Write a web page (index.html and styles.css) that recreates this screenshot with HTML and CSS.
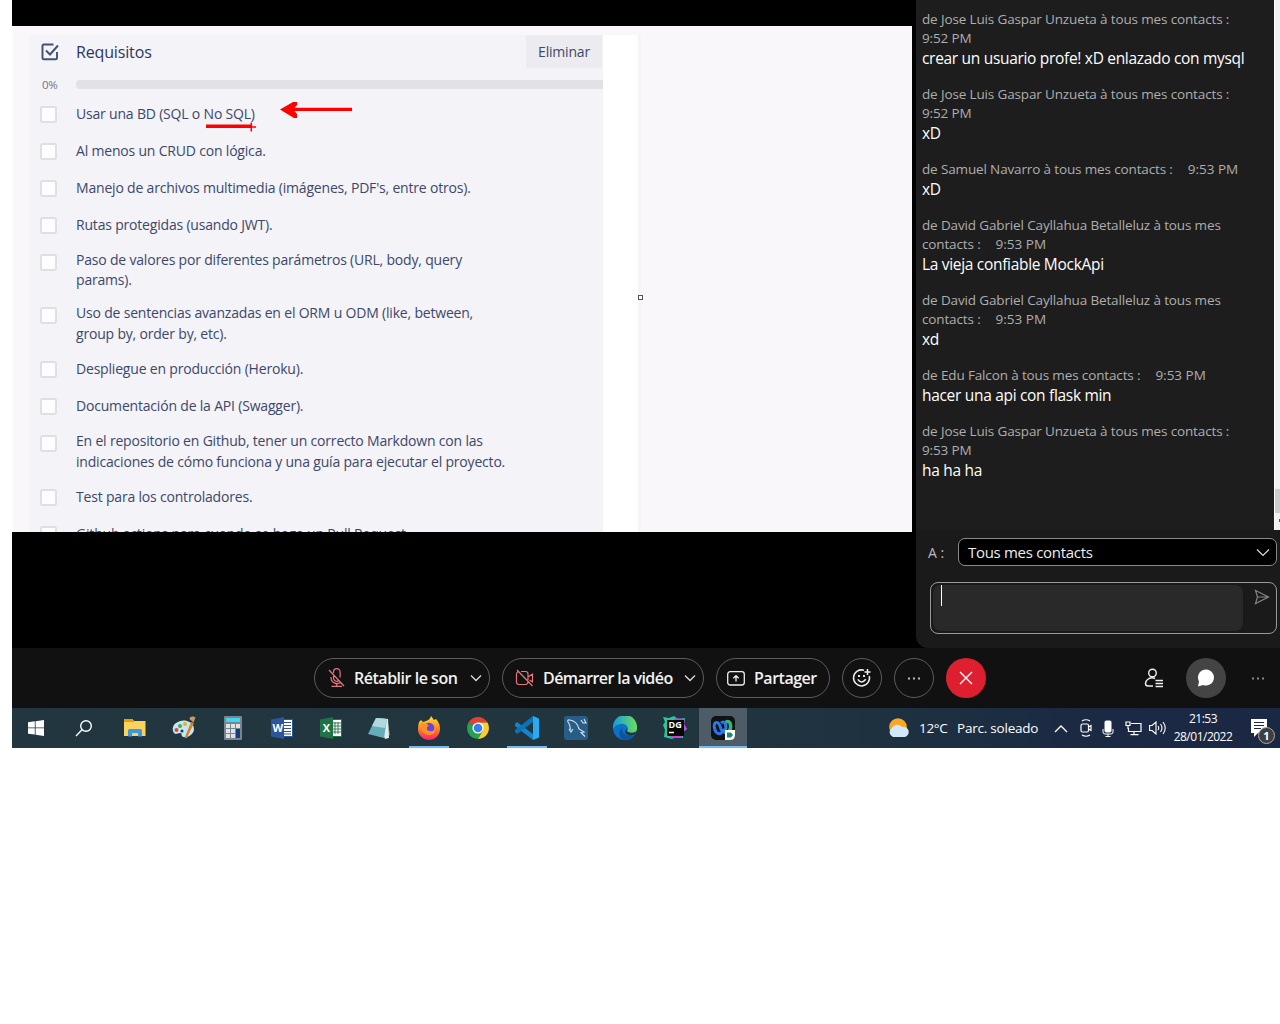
FILE: index.html
```html
<!DOCTYPE html>
<html lang="fr">
<head>
<meta charset="utf-8">
<title>Webex</title>
<link rel="stylesheet" href="styles.css">
</head>
<body>
<div class="desktop">
  <div class="meeting">
    <main class="shared">
      <section class="card">
        <header class="card-head">
          <svg class="check-icon" width="18" height="18" viewBox="0 0 18 18" fill="none" stroke="#44506e" stroke-width="1.9"><path d="M12.5 1.5H2.8Q1.500 1.500 1.500 2.800V15Q1.500 16.300 2.800 16.300H14.700Q16 16.300 16 15V9"/><path d="M5 7.500l4 4 8-9"/></svg>
          <h1>Requisitos</h1>
          <button class="delete">Eliminar</button>
        </header>
        <div class="progress"><span>0%</span><i></i></div>
        <ul class="tasks">
          <li><b></b><p>Usar una BD (SQL o No SQL)</p></li>
          <li><b></b><p>Al menos un CRUD con lógica.</p></li>
          <li><b></b><p>Manejo de archivos multimedia (imágenes, PDF's, entre otros).</p></li>
          <li><b></b><p>Rutas protegidas (usando JWT).</p></li>
          <li class="two"><b></b><p>Paso de valores por diferentes parámetros (URL, body, query<br>params).</p></li>
          <li class="two"><b></b><p>Uso de sentencias avanzadas en el ORM u ODM (like, between,<br>group by, order by, etc).</p></li>
          <li><b></b><p>Despliegue en producción (Heroku).</p></li>
          <li><b></b><p>Documentación de la API (Swagger).</p></li>
          <li class="two"><b></b><p>En el repositorio en Github, tener un correcto Markdown con las<br>indicaciones de cómo funciona y una guía para ejecutar el proyecto.</p></li>
          <li><b></b><p>Test para los controladores.</p></li>
          <li><b></b><p>Github actions para cuando se haga un Pull Request.</p></li>
        </ul>
      </section>
      <div class="gutter"></div>
      <svg class="marks" width="900" height="506" viewBox="12 26 900 506"><path d="M206 126.300H252" stroke="#f00" stroke-width="3.400"/><path d="M248 126.900h8M251.300 122.500v9" stroke="#f00" stroke-width="1.500"/><path d="M290 109.300H352" stroke="#f00" stroke-width="3.300"/><path d="M280 109.500L293 102H297V105L293 109.500L297 114V118H294Z" fill="#f00"/><rect x="638.500" y="295.500" width="4" height="4" fill="#fff" stroke="#555" /></svg>
    </main>
    <aside class="chat">
      <div class="log">
        <div class="messages">
          <article><p class="meta">de Jose Luis Gaspar Unzueta à tous mes contacts :<br>9:52 PM</p><p class="body">crear un usuario profe! xD enlazado con mysql</p></article>
          <article><p class="meta">de Jose Luis Gaspar Unzueta à tous mes contacts :<br>9:52 PM</p><p class="body">xD</p></article>
          <article><p class="meta">de Samuel Navarro à tous mes contacts :<time>9:53 PM</time></p><p class="body">xD</p></article>
          <article><p class="meta">de David Gabriel Cayllahua Betalleluz à tous mes<br>contacts :<time>9:53 PM</time></p><p class="body">La vieja confiable MockApi</p></article>
          <article><p class="meta">de David Gabriel Cayllahua Betalleluz à tous mes<br>contacts :<time>9:53 PM</time></p><p class="body">xd</p></article>
          <article><p class="meta">de Edu Falcon à tous mes contacts :<time>9:53 PM</time></p><p class="body">hacer una api con flask min</p></article>
          <article><p class="meta">de Jose Luis Gaspar Unzueta à tous mes contacts :<br>9:53 PM</p><p class="body">ha ha ha</p></article>
        </div>
        <div class="scroll"><i></i><s></s></div>
      </div>
      <div class="to"><label>A :</label><div class="select"><span>Tous mes contacts</span><svg width="14" height="9" viewBox="0 0 14 9" fill="none" stroke="#ddd" stroke-width="1.200"><path d="M1 1.500l6 6 6-6"/></svg></div></div>
      <div class="composer"><div class="field"><i></i></div><svg width="16" height="16" viewBox="0 0 16 16" fill="none" stroke="#858585" stroke-width="1.200"><path d="M1.500 1.500L14.500 8 1.500 14.500 3.500 8ZM3.500 8H14"/></svg></div>
    </aside>
  </div>

  <div class="controls">
    <button class="pill mute"><svg width="18" height="20" viewBox="0 0 18 20" fill="none" stroke="#e8777f" stroke-width="1.200"><path d="M5.500 5V4a3.300 3.300 0 0 1 6.600 0v5.500M5.500 6v4a3.300 3.300 0 0 0 5.500 2.500M3 9v1a6 6 0 0 0 10 4M8.800 15.500V18M3.500 18.300H14M1 2l15 16"/></svg><span>Rétablir le son</span><svg class="chev" width="12" height="8" viewBox="0 0 12 8" fill="none" stroke="#ddd" stroke-width="1.300"><path d="M1 1.500l5 5 5-5"/></svg></button>
    <button class="pill video"><svg width="20" height="18" viewBox="0 0 20 18" fill="none" stroke="#e8777f" stroke-width="1.200"><path d="M6 2.500H10.500Q13 2.500 13 5V11M13 13Q12.500 15.500 10.500 15.500H4Q1.500 15.500 1.500 13V5Q1.500 3.500 3 2.700M13 8l4.500-3v8L14.500 11M2 1l15.500 16"/></svg><span>Démarrer la vidéo</span><svg class="chev" width="12" height="8" viewBox="0 0 12 8" fill="none" stroke="#ddd" stroke-width="1.300"><path d="M1 1.500l5 5 5-5"/></svg></button>
    <button class="pill share"><svg width="18" height="15" viewBox="0 0 18 15" fill="none" stroke="#eee" stroke-width="1.300"><rect x=".7" y=".7" width="16.600" height="13.300" rx="2.500"/><path d="M9 10.500V5M6.300 7.300L9 4.700l2.700 2.600"/></svg><span>Partager</span></button>
    <button class="round"><svg width="20" height="20" viewBox="0 0 20 20" fill="none" stroke="#eee" stroke-width="1.500"><path d="M12 2.300A8 8 0 1 0 17.300 8M5.800 11.300q3.700 5.500 8 0M15.500 1v6M12.500 4h6"/><path d="M7 7v2M12 7v2" stroke-width="1.900"/></svg></button>
    <button class="round"><svg width="12" height="3" viewBox="0 0 12 3" fill="#bbb"><path d="M0 .5h2v2H0zM5 .5h2v2H5zM10 .5h2v2h-2z"/></svg></button>
    <button class="round leave"><svg width="14" height="14" viewBox="0 0 14 14" stroke="#fff" stroke-width="1.400"><path d="M1 1l12 12M13 1L1 13"/></svg></button>
    <div class="panels">
      <button class="bare"><svg width="20" height="20" viewBox="0 0 20 20" fill="none" stroke="#eee" stroke-width="1.400"><circle cx="8.500" cy="5" r="3.800"/><path d="M11 10.500q-3-1.500-6 0Q1.500 12.500 1.500 15.500 1.500 18 4 18h5M11.500 12.500H19M11.500 15.500H19M11.500 18.500H19"/></svg></button>
      <button class="round active"><svg width="18" height="18" viewBox="0 0 18 18" fill="#fff"><path d="M1 17.500L2 12.500A8 8 0 1 1 6 16Z"/></svg></button>
      <button class="bare"><svg width="12" height="3" viewBox="0 0 12 3" fill="#888"><path d="M0 .5h2v2H0zM5 .5h2v2H5zM10 .5h2v2h-2z"/></svg></button>
    </div>
  </div>

  <footer class="taskbar">
    <div class="apps">
      <span class="sys"><svg width="16" height="16" viewBox="0 0 16 16" fill="#fff"><path d="M0 2.300L6.800 1.300V7.500H0zM7.600 1.200L16 0V7.500H7.600zM0 8.300H6.800V14.600L0 13.700zM7.600 8.300H16V16L7.600 14.700z"/></svg></span>
      <span class="sys"><svg width="18" height="18" viewBox="0 0 18 18" fill="none" stroke="#fff" stroke-width="1.400"><circle cx="11" cy="7" r="5.300"/><path d="M7 10.800L1 17"/></svg></span>
      <span class="app"><svg width="22" height="20" viewBox="0 0 22 20"><path d="M0 1h8l2 2h11.500v15H0z" fill="#fbd35c"/><path d="M0 1h8.500l2 3H0z" fill="#e3a008"/><path d="M4 18.500v-6q0-1.500 1.500-1.500h11q1.500 0 1.500 1.500v6h-4v-3.500H8v3.500z" fill="#3e97e0"/></svg></span>
      <span class="app"><svg width="24" height="24" viewBox="0 0 24 24"><path d="M1 15C-1 8 8 3 15 5q7 2 7 8c0 5-6 9-10 8-4-.5-1-4-4-4s-5 3-7-2z" fill="#c5e6f5"/><circle cx="4.500" cy="14" r="2" fill="#e4453b"/><circle cx="8" cy="10" r="2" fill="#43ad4b"/><circle cx="13" cy="8" r="2" fill="#f1ae19"/><circle cx="10" cy="15" r="1.500" fill="#21394b"/><path d="M12.500 22L19 6l3 1-7 15z" fill="#d9842b"/><path d="M17.500 3q0-3 4-2.500l2 1-2 5z" fill="#c39a6b"/></svg></span>
      <span class="app"><svg width="18" height="24" viewBox="0 0 18 24"><rect width="18" height="24" rx="1" fill="#7b858d"/><path d="M2 2h14v4H2z" fill="#43d5f5"/><path d="M2 8h4v4H2zM7 8h4v4H7zM12 8h4v4h-4zM2 13h4v4H2zM7 13h4v4H7zM2 18h4v4H2zM7 18h4v4H7z" fill="#dfe3e6"/><path d="M12 13h4v9h-4z" fill="#153f78"/></svg></span>
      <span class="app"><svg width="22" height="22" viewBox="0 0 22 22"><path d="M12 2.500h9.500v17H12z" fill="#fff" stroke="#2b579a"/><path d="M13 5.500h7M13 8.500h7M13 11.500h7M13 14.500h7M13 17h7" stroke="#2b579a" stroke-width="1.200"/><path d="M0 2.500L13 0v22L0 19.500z" fill="#2b579a"/><text x="1.500" y="15" class="office">W</text></svg></span>
      <span class="app"><svg width="22" height="22" viewBox="0 0 22 22"><path d="M12 2.500h9.500v17H12z" fill="#fff" stroke="#217346"/><path d="M15 5v12M18 5v12M13 6h8M13 9h8M13 12h8M13 15h8" stroke="#217346" stroke-width=".9"/><path d="M0 2.500L13 0v22L0 19.500z" fill="#217346"/><text x="2.800" y="15" class="office">X</text></svg></span>
      <span class="app"><svg width="24" height="22" viewBox="0 0 24 22"><path d="M19 1l3 17-4 2z" fill="#9c7c4b"/><path d="M8 1l12 1 1 19-4 1z" fill="#dceef0"/><path d="M8 1l11 1-3 19L0 17z" fill="#65adbb"/><path d="M8 1l11 1-2 9-13-2z" fill="#afd9df"/></svg></span>
      <span class="app open"><svg width="24" height="24" viewBox="0 0 24 24"><defs><linearGradient id="ff" x2="0" y2="1"><stop stop-color="#ffe23b"/><stop offset=".5" stop-color="#ff8a20"/><stop offset="1" stop-color="#f9206c"/></linearGradient></defs><path d="M2 6l2-2 2 2 3-1q4-1 5-5l3 4 2-1q4 4 4 10a11 11 0 0 1-22 0Q1 9 2 6z" fill="url(#ff)"/><circle cx="12" cy="12" r="5.300" fill="#6f43d8"/><path d="M4 7l6 1q3 2 0 3-1 4 3 4 4 1 5-3 1 6-5 7-6 0-8-5z" fill="#ff9126"/></svg></span>
      <span class="app"><svg width="22" height="22" viewBox="0 0 22 22"><path d="M11 11L1.500 5.500A11 11 0 0 1 20.500 5.500H11z" fill="#e44134"/><path d="M11 11L1.500 5.500A11 11 0 0 0 11 22l4.800-8.300z" fill="#25a251"/><path d="M11 5.500h9.500A11 11 0 0 1 11 22l4.800-8.300z" fill="#fbcc2f"/><circle cx="11" cy="11" r="5.600" fill="#fff"/><circle cx="11" cy="11" r="4.300" fill="#367ff0"/></svg></span>
      <span class="app open"><svg width="24" height="24" viewBox="0 0 24 24"><path d="M0 8l2-2 16 12v6L0 10z" fill="#1683cc"/><path d="M0 16l2 2L18 6V0L0 14z" fill="#0874bc"/><path d="M18 0l6 2.500v19L18 24z" fill="#2baaf2"/></svg></span>
      <span class="app"><svg width="24" height="24" viewBox="0 0 24 24" fill="none"><rect width="24" height="24" rx="3" fill="#275d87"/><path d="M6 15Q7 10 4 6 3 3.500 6 4q7 1 9 9l5 3-3 .5 4 4M5 13l2 3 2-3M17 4l2 3 3 0-2-4" stroke="#d7e5ed" stroke-width="1.100"/></svg></span>
      <span class="app"><svg width="24" height="24" viewBox="0 0 24 24"><defs><linearGradient id="edge"><stop stop-color="#149bdd"/><stop offset="1" stop-color="#6bde58"/></linearGradient></defs><circle cx="12" cy="12" r="12" fill="#0b72ca"/><path d="M0 10a12 12 0 0 1 24 2c0 5-5 6-9 4-2-1 0-2 0-4Q13 7 7 8 2 9 0 13z" fill="url(#edge)"/><path d="M10 10q-3 7 5 10 4 1 7-1-5 7-13 4-6-5 1-13z" fill="#0d539f"/><path d="M14.500 15.500q4 2.500 8.500 0l-1 3q-7 3-10-2 0-3 2-4 1 1-.5 3z" fill="#21363f"/></svg></span>
      <span class="app"><svg width="24" height="24" viewBox="0 0 24 24"><path d="M0 1l6 1 5-2 4 3 7-1-1 6 3 5-4 3v6l-7-1-4 2-8-2 1-7-2-5 2-3z" fill="#26c99b"/><path d="M12 2l10 1-1 5 3 5-5 3v6H7z" fill="#c545df"/><path d="M4 4h17v16H4z" fill="#070707"/><path d="M6 16.500h5" stroke="#fff" stroke-width="1.500"/><text x="5.500" y="12" class="dg">DG</text></svg></span>
      <span class="app current"><svg width="24" height="24" viewBox="0 0 24 24" fill="none"><rect width="24" height="24" rx="5" fill="#101213"/><path d="M14 7q3-3 5 0 2 6-2 9-3 2-5-3" stroke="#33b96e" stroke-width="3.500"/><path d="M12 15Q9 20 5 16 2 10 4 7q3-2 5 3 2 8 5 5 2-4 0-8-2-2-4 0" stroke="#2579ed" stroke-width="3"/><path d="M14 14h10v5q0 5-5 5h-5z" fill="#fff"/><path d="M16 16.500h4l2 2.500-2 2.500h-4z" fill="#138e75"/></svg></span>
    </div>
    <div class="tray">
      <svg class="weather" width="21" height="20" viewBox="0 0 21 20"><circle cx="10" cy="9" r="8.800" fill="#f9a825"/><path d="M5 19a5 5 0 0 1-1-9 6 6 0 0 1 10-1 5 5 0 0 1 3 10z" fill="#d1e9fb"/></svg>
      <span class="temp">12°C</span><span class="sky">Parc. soleado</span>
      <svg class="up" width="14" height="9" viewBox="0 0 14 9" fill="none" stroke="#fff" stroke-width="1.300"><path d="M1 8l6-6 6 6"/></svg>
      <svg class="cam" width="12" height="18" viewBox="0 0 12 18" fill="none" stroke="#fff" stroke-width="1.200"><rect x="1" y="5" width="7.500" height="8" rx="1.500"/><path d="M8.500 8l2.500-1.500v5L8.500 10M2 2q4-2.500 8 0M2 16q4 2.500 8 0"/></svg>
      <svg class="mic" width="12" height="17" viewBox="0 0 12 17" fill="none" stroke="#fff"><rect x="3" y="1" width="6" height="11" rx="1" fill="#fff"/><path d="M1 9v3q0 2 2 2h6q2 0 2-2V9M6 14v2M3.500 16.500h5"/></svg>
      <svg class="net" width="17" height="15" viewBox="0 0 17 15" fill="none" stroke="#fff" stroke-width="1.200"><path d="M6 2.500h10v8H3.500V7M9 10.500v3M5.500 13.700h8M1 1h4v3.500H1zM3 4.500V8"/></svg>
      <svg class="vol" width="17" height="14" viewBox="0 0 17 14" fill="none" stroke="#fff" stroke-width="1.100"><path d="M.6 4.500h2.500L7 1v12L3.100 9.500H.6zM9 5q1.500 2 0 4M11.500 3q3 4 0 8M14 1q4.500 6 0 12"/></svg>
      <div class="clock"><span>21:53</span><span>28/01/2022</span></div>
      <div class="notice"><svg width="16" height="18" viewBox="0 0 16 18"><path d="M0 0h16v14H7l-4 4v-4H0z" fill="#fff"/><path d="M3 3.500h10M3 6.500h10M3 9.500h7" stroke="#1b2843" stroke-width="1.200"/></svg><b>1</b></div>
    </div>
  </footer>
</div>
</body>
</html>
```
FILE: styles.css
```css
* { box-sizing: border-box; }
body { margin: 0; background: #fff; font-family: "Open Sans", "Noto Sans", sans-serif; overflow: hidden; }
h1, p, ul { margin: 0; padding: 0; font-weight: 400; }
button { font: inherit; padding: 0; border: 0; background: none; color: inherit; }
svg { display: block; flex: none; }

.desktop { width: 1268px; height: 748px; margin-left: 12px; background: #000; overflow: hidden; }
.meeting { display: flex; height: 648px; gap: 4px; }

.shared { position: relative; display: flex; width: 900px; height: 506px; margin-top: 26px; padding: 9px 0 0 16px; background: #f9f7fa; overflow: hidden; flex: none; border-left: 1px solid #fff; }
.card { width: 574px; background: #f3f3f8; color: #3d4868; }
.gutter { width: 38px; background: #fff; border-right: 3px solid #f5f4f8; }
.marks { position: absolute; left: -1px; top: 0; }
.card-head { display: flex; height: 33px; align-items: center; padding-left: 12px; }
.card-head h1 { margin-left: 17px; font-size: 16px; font-weight: 500; letter-spacing: -.15px; flex: 1; color: #2b3758; }
.delete { width: 76px; height: 33px; background: #ecebf0; font-size: 14px; letter-spacing: -.2px; margin-right: 1px; border-radius: 2px; }
.progress { display: flex; height: 27.500px; align-items: center; padding: 6px 0 0 13px; font-size: 11.500px; color: #6b7388; }
.progress span { width: 34px; letter-spacing: -.4px; }
.progress i { flex: 1; height: 9px; background: #e2e2e6; border-radius: 4px 0 0 4px; }
.tasks { list-style: none; }
.tasks li { display: flex; height: 37px; padding: 8px 0 0 11px; }
.tasks .two { height: 53.800px; padding-top: 6px; }
.tasks b { width: 17px; height: 17px; margin-top: 2px; border: 2px solid #e0dfe5; background: #fdfcff; border-radius: 2px; flex: none; }
.tasks .two b { margin-top: 4.200px; }
.tasks p { margin-left: 19px; font-size: 14px; line-height: 20.600px; letter-spacing: -.19px; white-space: nowrap; }

.chat { width: 364px; background: #1a1a1a; border-bottom-left-radius: 12px; flex: none; overflow: hidden; }
.log { display: flex; height: 530px; background: #1d1d1d; }
.messages { width: 358px; padding: 10px 0 0 6px; white-space: nowrap; }
article { margin-bottom: 16px; }
.meta { font-size: 13.500px; line-height: 19px; color: #aeaeae; letter-spacing: -.14px; }
.meta time { margin-left: 15px; letter-spacing: 0; }
.body { font-size: 15.500px; line-height: 21px; color: #fff; letter-spacing: -.31px; }
.scroll { display: flex; flex-direction: column; justify-content: flex-end; width: 6px; background: #f1f1f1; border-left: 1px solid #fff; }
.scroll i { height: 24px; background: #cdcdcd; }
.scroll s { width: 1px; height: 3px; margin: 6px 0 8px 4px; background: #555; }
.to { display: flex; align-items: center; padding: 8px 3px 0 12px; color: #bbb; font-size: 14px; }
.to label { width: 30px; }
.select { display: flex; flex: 1; height: 28px; align-items: center; justify-content: space-between; padding: 0 6px 0 9px; border: 1px solid #8a8a8a; border-radius: 7px; background: #000; color: #eee; font-size: 15px; letter-spacing: -.3px; }
.composer { display: flex; height: 52px; margin: 16px 3px 0 14px; padding: 2px 6px 2px 2px; border: 1px solid #9a9a9a; border-radius: 8px; justify-content: space-between; }
.composer svg { margin-top: 4px; }
.field { width: 310px; background: #292929; border-radius: 8px; }
.field i { display: block; width: 1px; height: 21px; margin-left: 8px; background: #fff; }

.controls { display: flex; height: 60px; padding: 10px 2px 10px 302px; gap: 12px; background: #111; color: #f2f2f2; font-size: 16px; font-weight: 600; }
.pill { display: flex; height: 40px; align-items: center; border: 1px solid #5c5c5c; border-radius: 20px; letter-spacing: -.48px; white-space: nowrap; }
.pill .chev { margin-left: auto; }
.mute { width: 176px; padding: 0 7px 0 13px; }
.mute span { margin-left: 8px; }
.video { width: 202px; padding: 0 7px 0 12px; letter-spacing: -.58px; }
.video span { margin-left: 8px; }
.share { width: 114px; padding-left: 10px; }
.share span { margin-left: 9px; }
.round, .bare { display: flex; width: 40px; height: 40px; align-items: center; justify-content: center; border-radius: 50%; }
.round { border: 1px solid #5c5c5c; }
.leave { background: #de1f30; border: 0; }
.panels { display: flex; gap: 12px; margin-left: auto; }
.active { border: 0; background: #444; }

.taskbar { display: flex; height: 40px; justify-content: space-between; background: linear-gradient(90deg, #21363f 0, #21353f 55%, #1d3040 72%, #1b2943 85%, #1b2843 100%); color: #fff; }
.apps { display: flex; }
.sys, .app { display: flex; align-items: center; justify-content: center; }
.sys { width: 48px; }
.sys + .app { margin-left: 2px; }
.app { width: 49.100px; }
.open { background: linear-gradient(#76b9ed, #76b9ed) center bottom / 40px 2px no-repeat; }
.current { width: 48px; background: #4d5c66; border-bottom: 2px solid #76b9ed; padding-top: 2px; }
.office { font: 700 11px "Open Sans", sans-serif; fill: #fff; }
.dg { font: 700 9px "Open Sans", sans-serif; fill: #fff; }
.tray { display: flex; align-items: center; width: 392px; font-size: 13.500px; white-space: nowrap; }
.temp { width: 38px; margin-left: 10px; letter-spacing: -.3px; }
.sky { width: 97px; letter-spacing: -.22px; }
.cam { margin-left: 12px; }
.mic { margin-left: 10px; }
.net { margin-left: 11px; }
.vol { margin-left: 7px; }
.clock { display: flex; flex-direction: column; align-items: center; width: 60px; margin-left: 7px; font-size: 12px; line-height: 18px; letter-spacing: -.5px; }
.notice { position: relative; width: 16px; height: 18px; margin-left: 18px; }
.notice b { position: absolute; left: 7px; top: 8px; width: 17px; height: 17px; border: 1px solid #aaa; border-radius: 50%; background: #3c4043; font-size: 11px; line-height: 15px; text-align: center; }
```
